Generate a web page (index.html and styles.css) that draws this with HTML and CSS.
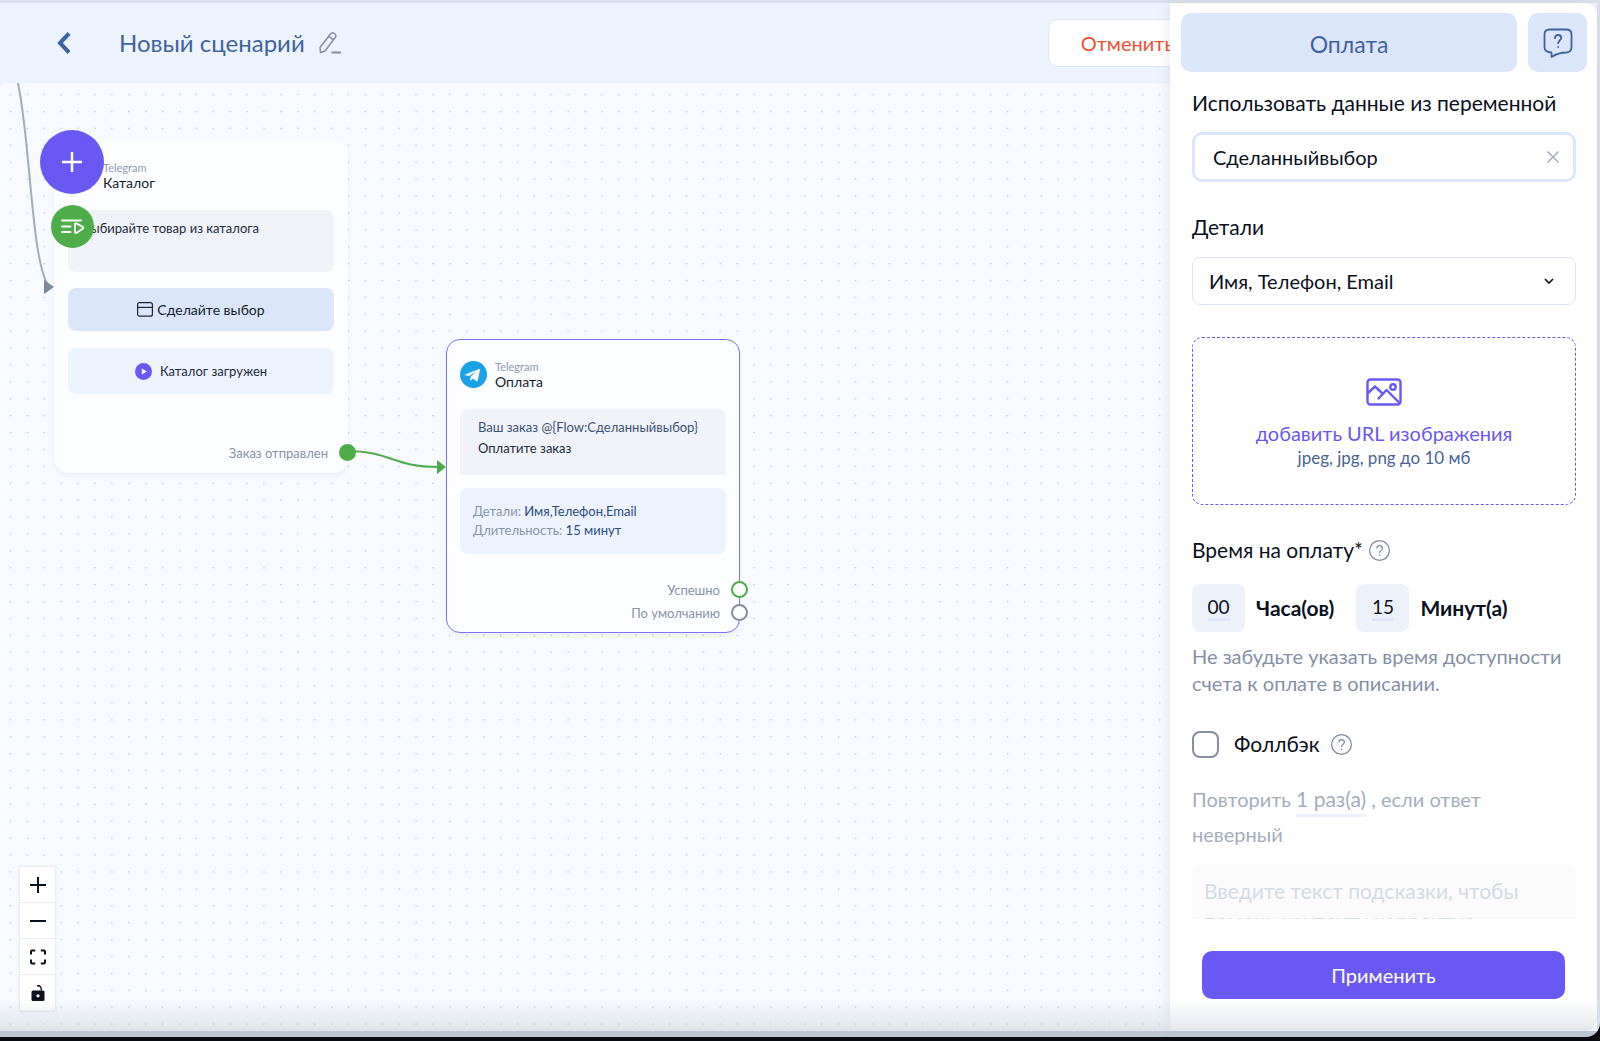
FILE: index.html
```html
<!DOCTYPE html>
<html lang="ru">
<head>
<meta charset="utf-8">
<meta name="viewport" content="width=device-width, initial-scale=1">
<title>Новый сценарий</title>
<link rel="stylesheet" href="styles.css">
</head>
<body>
<div class="window">
  <div class="editor">
    <header class="topbar">
      <button class="icon-btn back" aria-label="Назад">
        <svg width="14" height="22" viewBox="0 0 14 22"><path d="M12 1.500 3 11l9 9.500" fill="none" stroke="#3f639f" stroke-width="4"/></svg>
      </button>
      <h1 class="title">Новый сценарий</h1>
      <button class="icon-btn" aria-label="Переименовать">
        <svg width="22" height="24" viewBox="0 0 22 24" fill="none" stroke="#838d9e" stroke-width="1.500" stroke-linejoin="round"><path d="M1.500 21.500 1 16.500 11.500 3c1.100-1.400 2.600-1.500 4-.5 1.500 1.100 1.700 2.600.7 4L6 20zM9.800 5.400l4.800 3.600"/><path d="M12.500 21.500H22" stroke-width="2"/></svg>
      </button>
      <button class="cancel">Отменить</button>
    </header>

    <main class="canvas">
      <svg class="layer" aria-hidden="true">
        <defs>
          <pattern id="dots" x="1.900" y="3" width="16.9" height="16.9" patternUnits="userSpaceOnUse"><rect x="8" y="8" width="1.200" height="1.200" fill="#adb5c2"/></pattern>
        </defs>
        <rect width="100%" height="100%" fill="url(#dots)"/>
      </svg>

      <article class="node node-catalog">
        <header class="node-head">
          <span class="avatar"></span>
          <div><p class="channel">Telegram</p><h2 class="node-name">Каталог</h2></div>
        </header>
        <p class="message message-plain">Выбирайте товар из каталога</p>
        <button class="choice">
          <svg width="16" height="15" viewBox="0 0 16 15" fill="none" stroke="#1c2533" stroke-width="1.200"><rect x=".6" y=".6" width="14.800" height="13.600" rx="2"/><path d="M.6 5.400h14.800"/></svg>
          Сделайте выбор
        </button>
        <div class="status">
          <svg width="17" height="17" viewBox="0 0 17 17"><circle cx="8.500" cy="8.500" r="8.500" fill="#6a58f4"/><path d="M6.800 5.500 11.800 8.500l-5 3z" fill="#fff"/></svg>
          Каталог загружен
        </div>
        <ul class="outputs"><li>Заказ отправлен<span class="port port-linked"></span></li></ul>
      </article>

      <article class="node node-payment">
        <header class="node-head">
          <svg class="avatar" viewBox="0 0 27 27"><circle cx="13.500" cy="13.500" r="13.500" fill="#1ba1e8"/><path d="M5 13.400 19 8.100c.6-.2 1 .1.900.8l-2.100 10.700c-.2.800-.7 1-1.300.6l-3.600-2.700-1.900 1.900c-.3.200-.6.300-.6-.2l.2-3.400 5.500-5.200-7 4.300-3.900-.7c-.7-.2-.7-.6-.2-.8z" fill="#fff"/></svg>
          <div><p class="channel">Telegram</p><h2 class="node-name">Оплата</h2></div>
        </header>
        <p class="message message-order"><span class="ink">Ваш заказ @{Flow:Сделанныйвыбор}</span><br>Оплатите заказ</p>
        <dl class="summary">
          <div><dt>Детали:</dt> <dd>Имя,Телефон,Email</dd></div>
          <div><dt>Длительность:</dt> <dd>15 минут</dd></div>
        </dl>
        <ul class="outputs">
          <li>Успешно<span class="port port-success"></span></li>
          <li>По умолчанию<span class="port"></span></li>
        </ul>
      </article>

      <svg class="layer" aria-hidden="true">
        <path d="M18 0C31 62 31 178 49 204" fill="none" stroke="#a3adb9" stroke-width="2"/>
        <path d="M44 197v14l10-7z" fill="#7c879a"/>
        <path d="M346 368C392 368 392 384 438 384" fill="none" stroke="#4eac4b" stroke-width="2"/>
        <path d="M437 377v14l9-7z" fill="#4eac4b"/>
      </svg>

      <button class="fab fab-add" aria-label="Добавить">
        <svg width="20" height="20" viewBox="0 0 20 20"><path d="M10 0v20M0 10h20" stroke="#fff" stroke-width="2.400"/></svg>
      </button>
      <button class="fab fab-run" aria-label="Запустить">
        <svg width="24" height="18" viewBox="0 0 24 18" fill="none" stroke="#fff" stroke-width="1.800" stroke-linecap="round" stroke-linejoin="round"><path d="M1 2.500h19M1 8.500h8.500M1 14h8.500M14 6.200q0-1.200 1.300-.8l6.500 3.500q1.200.9 0 1.800l-6.500 4.200q-1.300.5-1.300-.8z"/></svg>
      </button>

      <div class="zoom">
        <button aria-label="Увеличить"><svg width="16" height="16" viewBox="0 0 16 16"><path d="M8 0v16M0 8h16" stroke="#0b111c" stroke-width="2"/></svg></button>
        <button aria-label="Уменьшить"><svg width="16" height="16" viewBox="0 0 16 16"><path d="M0 8h16" stroke="#0b111c" stroke-width="2"/></svg></button>
        <button aria-label="Показать всё"><svg width="16" height="16" viewBox="0 0 16 16" fill="none" stroke="#0b111c" stroke-width="2"><path d="M1 5.500V2.500q0-1 1-1h3.200M10.800 1.500H14q1 0 1 1v3M15 10.500v3q0 1-1 1h-3.200M5.200 14.500H2q-1 0-1-1v-3"/></svg></button>
        <button aria-label="Заблокировать"><svg width="14" height="16" viewBox="0 0 14 16"><path d="M6 1C9 .2 10.500 2 10.300 5.500" fill="none" stroke="#0b111c" stroke-width="1.400"/><path d="M2 5.500h10q1.500 0 1.500 1.500v7.500q0 1.500-1.500 1.500H2Q.5 16 .5 14.500V7Q.5 5.500 2 5.500z" fill="#0b111c"/><circle cx="7" cy="10.800" r="1.600" fill="#fff"/></svg></button>
      </div>
    </main>
  </div>

  <aside class="drawer">
    <div class="drawer-head">
      <h2 class="drawer-title">Оплата</h2>
      <button class="help" aria-label="Помощь">
        <svg width="30" height="30" viewBox="0 0 30 30" fill="none" stroke="#3f639f" stroke-width="1.800" stroke-linejoin="round" stroke-linecap="round"><path d="M6.500 1.500h17q5 0 5 5v12.500q0 5-5 5.500-8 0-15 4.500v-4.700q-7 0-7-5.300V6.500q0-5 5-5z"/><path d="M12 10.200c0-4.400 6.200-4 6.200-.3 0 2.300-3 2.600-3 5.300M15.200 18.800v.3"/></svg>
      </button>
    </div>
    <form class="drawer-body">
      <label class="label" for="variable">Использовать данные из переменной</label>
      <div class="field">
        <input class="control control-active" id="variable" type="text" value="Сделанныйвыбор">
        <button class="clear" type="button" aria-label="Очистить"><svg width="12" height="12" viewBox="0 0 12 12"><path d="m.5.500 11 11m0-11-11 11" stroke="#9aa5b5" stroke-width="1.300"/></svg></button>
      </div>

      <label class="label label-details" for="details">Детали</label>
      <div class="field">
        <select class="control" id="details"><option>Имя, Телефон, Email</option></select>
        <svg class="chevron" width="10" height="7" viewBox="0 0 10 7"><path d="m1 1 4 4 4-4" fill="none" stroke="#0b111c" stroke-width="1.600"/></svg>
      </div>

      <button class="upload" type="button">
        <svg width="36" height="28" viewBox="0 0 36 28" fill="none" stroke="#6a58f4" stroke-width="2.400" stroke-linejoin="round" stroke-linecap="round"><rect x="1.500" y="1.500" width="33" height="25" rx="3"/><path d="m2 15 7-6.500 8 7.500M12.500 20.500l8-8.500 13 13"/><circle cx="27" cy="9" r="2.700"/></svg>
        <span class="upload-text">добавить URL изображения</span>
        <span class="upload-hint">jpeg, jpg, png до 10 мб</span>
      </button>

      <div class="label label-time">Время на оплату*
        <svg width="21" height="21" viewBox="0 0 20 20" fill="none" stroke="#7d8aa0" stroke-width="1.200"><circle cx="10" cy="10" r="9.400"/><path d="M7.500 8c0-3.600 5.200-3.300 5.200-.2 0 2-2.600 2.200-2.600 4.500M10.100 13.700v1.500"/></svg>
      </div>
      <div class="time">
        <span class="cell"><input class="num" id="hours" type="text" value="00"></span><label for="hours">Часа(ов)</label>
        <span class="cell"><input class="num" id="minutes" type="text" value="15"></span><label for="minutes">Минут(а)</label>
      </div>
      <p class="note">Не забудьте указать время доступности счета к оплате в описании.</p>

      <div class="check">
        <input id="fallback" type="checkbox"><label for="fallback">Фоллбэк</label>
        <svg width="21" height="21" viewBox="0 0 20 20" fill="none" stroke="#7d8aa0" stroke-width="1.200"><circle cx="10" cy="10" r="9.400"/><path d="M7.500 8c0-3.600 5.200-3.300 5.200-.2 0 2-2.600 2.200-2.600 4.500M10.100 13.700v1.500"/></svg>
      </div>
      <p class="repeat">Повторить <span class="count">1 раз(а)</span> , если ответ неверный</p>
      <textarea class="prompt" disabled aria-label="Текст подсказки" placeholder="Введите текст подсказки, чтобы помочь контакту корректно"></textarea>
    </form>
    <div class="drawer-foot"><button class="apply">Применить</button></div>
  </aside>
  <div class="shade"></div>
</div>
</body>
</html>
```
FILE: styles.css
```css
*, *::before, *::after { box-sizing: border-box; }

html { background: #090b10; }

body {
  display: flex;
  flex-direction: column;
  height: 100vh;
  margin: 0;
  padding-bottom: 4px;
  font-family: Lato, "Noto Sans", sans-serif;
  font-size: 20px;
  line-height: 28px;
  color: #0b111c;
}

h1, h2, p, ul, dl, dd { margin: 0; padding: 0; font-weight: 400; }
ul { list-style: none; }
button, input, select, textarea { font: inherit; color: inherit; margin: 0; }
button { padding: 0; border: 0; background: none; cursor: pointer; }
svg { display: block; flex: none; }

.window {
  position: relative;
  flex: 1;
  min-height: 0;
  border: solid #dbe1ea;
  border-width: 3px 3px 6px 0;
  border-bottom-color: #c0c7d4;
  border-radius: 0 0 14px 0;
  background: #dbe1ea;
}

.editor { display: flex; flex-direction: column; height: 100%; background: #edf4ff; }

/* Top bar */
.topbar {
  display: flex;
  align-items: center;
  height: 80px;
  flex: none;
  padding: 0 390px 0 57px;
}
.back { margin-right: 48px; }
.title { margin-right: 14px; font-size: 24px; color: #3f639f; }
.cancel {
  height: 48px;
  margin-left: auto;
  padding: 0 32px;
  border: 1px solid #dce6fa;
  border-radius: 10px;
  background: #fff;
  color: #ee5135;
}

/* Canvas */
.canvas {
  position: relative;
  flex: 1;
  min-height: 0;
  overflow: hidden;
  border-top-left-radius: 8px;
  background: #f7fafe;
}
.layer { position: absolute; inset: 0; width: 100%; height: 100%; pointer-events: none; }

.node {
  position: absolute;
  display: flex;
  flex-direction: column;
  width: 294px;
  padding: 19px 13px 5px;
  border: 1px solid #fcfdff;
  border-radius: 14px;
  background: #fdfeff;
  box-shadow: 0 3px 4px rgba(60, 80, 110, .05);
  font-size: 13px;
  line-height: 18px;
}
.node-catalog { left: 54px; top: 57px; height: 333px; }
.node-payment { left: 446px; top: 256px; height: 294px; border-color: #7f70f4; }
.node-head { display: flex; align-items: center; gap: 8px; height: 30px; margin-bottom: 20px; }
.avatar { width: 27px; height: 27px; }
.channel { font-size: 11px; line-height: 15px; color: #8e9ab0; }
.node-name { font-size: 14px; line-height: 15px; color: #141c2b; }
.message { height: 62px; padding: 9px 18px; border-radius: 8px; background: #f0f3f8; color: #222b3a; }
.message-plain { padding-left: 14px; }
.message-order { height: 66px; padding-top: 8px; border-radius: 8px 8px 0 0; line-height: 21px; }
.ink { color: #3d5274; }
.choice, .status { display: flex; align-items: center; justify-content: center; border-radius: 8px; }
.choice { gap: 4px; height: 43px; margin-top: 16px; background: #dce6fa; font-size: 14px; color: #141c2b; }
.status { gap: 8px; height: 46px; margin-top: 17px; background: #eef4ff; color: #222b3a; }
.summary { height: 66px; margin-top: 13px; padding: 14px 13px; border-radius: 8px; background: #edf4ff; line-height: 19px; }
.summary dt, .summary dd { display: inline; }
.summary dt { color: #8894a8; }
.summary dd { color: #2c4a80; }
.outputs { margin-top: auto; color: #8793a8; text-align: right; }
.outputs li { position: relative; height: 23px; padding-right: 6px; }
.port {
  position: absolute;
  right: -22px;
  top: 0;
  width: 17px;
  height: 17px;
  border: 2px solid #838d9e;
  border-radius: 50%;
  background: #fff;
}
.port-success { border-color: #4eac4b; }
.port-linked { border-color: #4eac4b; background: #4eac4b; }

.fab { position: absolute; display: grid; place-items: center; border-radius: 50%; }
.fab-add { left: 40px; top: 47px; width: 64px; height: 64px; background: #6a58f4; }
.fab-run { left: 51px; top: 122px; width: 43px; height: 43px; background: #4eac4b; }

.zoom {
  position: absolute;
  left: 20px;
  bottom: 20px;
  width: 35px;
  background: #fff;
  box-shadow: 0 0 2px 1px rgba(0, 0, 0, .08);
}
.zoom button { display: grid; place-items: center; width: 100%; height: 36px; border-bottom: 1px solid #e9eef5; }

/* Drawer over the editor */
.drawer {
  position: absolute;
  top: 0;
  right: 0;
  bottom: 0;
  display: flex;
  flex-direction: column;
  width: 427px;
  border-radius: 0 12px 12px 0;
  background: #fff;
  box-shadow: -3px 0 12px rgba(80, 100, 130, .1);
}
.drawer-head { display: flex; gap: 11px; flex: none; padding: 10px 10px 17px 11px; }
.drawer-title, .help { height: 59px; border-radius: 10px; background: #dce6fa; }
.drawer-title { flex: 1; font-size: 23px; line-height: 62px; text-align: center; color: #3f639f; }
.help { display: grid; place-items: center; width: 59px; }

.drawer-body { flex: 1; min-height: 0; overflow: hidden; padding: 0 21px 0 22px; }
.label { display: block; margin-bottom: 15px; font-size: 21px; }
.label-details { margin: 31px 0 16px; }
.label-time { display: flex; align-items: center; gap: 6px; margin: 31px 0 20px; }
.field { position: relative; }
.control {
  display: block;
  width: 100%;
  height: 48px;
  padding: 0 16px;
  border: 1px solid #dce6fa;
  border-radius: 8px;
  outline: 0;
  background: #fff;
  appearance: none;
}
.control-active { height: 50px; padding: 0 18px; border-width: 3px; border-radius: 10px; }
.clear { position: absolute; right: 17px; top: 19px; }
.chevron { position: absolute; right: 22px; top: 21px; pointer-events: none; }

.upload {
  display: flex;
  flex-direction: column;
  align-items: center;
  justify-content: center;
  width: 100%;
  height: 168px;
  margin-top: 32px;
  padding-top: 4px;
  border: 1px dashed #6a58f4;
  border-radius: 10px;
}
.upload-text { margin-top: 13px; color: #6a58f4; }
.upload-hint { font-size: 17px; line-height: 22px; color: #4a6493; }

.time { display: flex; align-items: center; font-weight: 700; font-size: 21px; }
.time label { margin: 0 22px 0 11px; }
.cell { display: grid; place-items: center; width: 53px; height: 48px; border-radius: 8px; background: #edf1f9; }
.num {
  width: 22px;
  height: 25px;
  padding: 0;
  border: solid #dce6fa;
  border-width: 0 0 3px;
  outline: 0;
  background: none;
  font-weight: 400;
  font-size: 19px;
  text-align: center;
}
.note { margin-top: 11px; line-height: 27px; color: #8490a4; }

.check { display: flex; align-items: center; margin-top: 33px; font-size: 21px; }
.check input { width: 27px; height: 27px; border: 2px solid #838fa3; border-radius: 8px; background: #fff; appearance: none; }
.check label { margin: 0 11px 0 15px; }
.repeat { margin-top: 24px; padding-right: 32px; line-height: 34px; color: #a4aebb; }
.count { display: inline-block; font-size: 21px; line-height: 30px; border-bottom: 3px solid #edf3fe; }
.prompt {
  display: block;
  width: 100%;
  height: 120px;
  margin-top: 13px;
  padding: 12px;
  border: 0;
  border-radius: 10px;
  background: #fbfbfc;
  font-size: 21px;
  line-height: 30px;
  resize: none;
}
.prompt::placeholder { color: #d3dae5; }

.drawer-foot { flex: none; padding: 32px; }
.apply { display: block; width: 100%; height: 48px; border-radius: 10px; background: #6a58f4; color: #fff; }

/* Soft shadow along the lower edge */
.shade {
  position: absolute;
  inset: auto 0 0;
  height: 32px;
  border-radius: 0 0 12px 0;
  background: linear-gradient(rgba(200, 207, 218, 0), rgba(200, 207, 218, .5));
  pointer-events: none;
}
```
